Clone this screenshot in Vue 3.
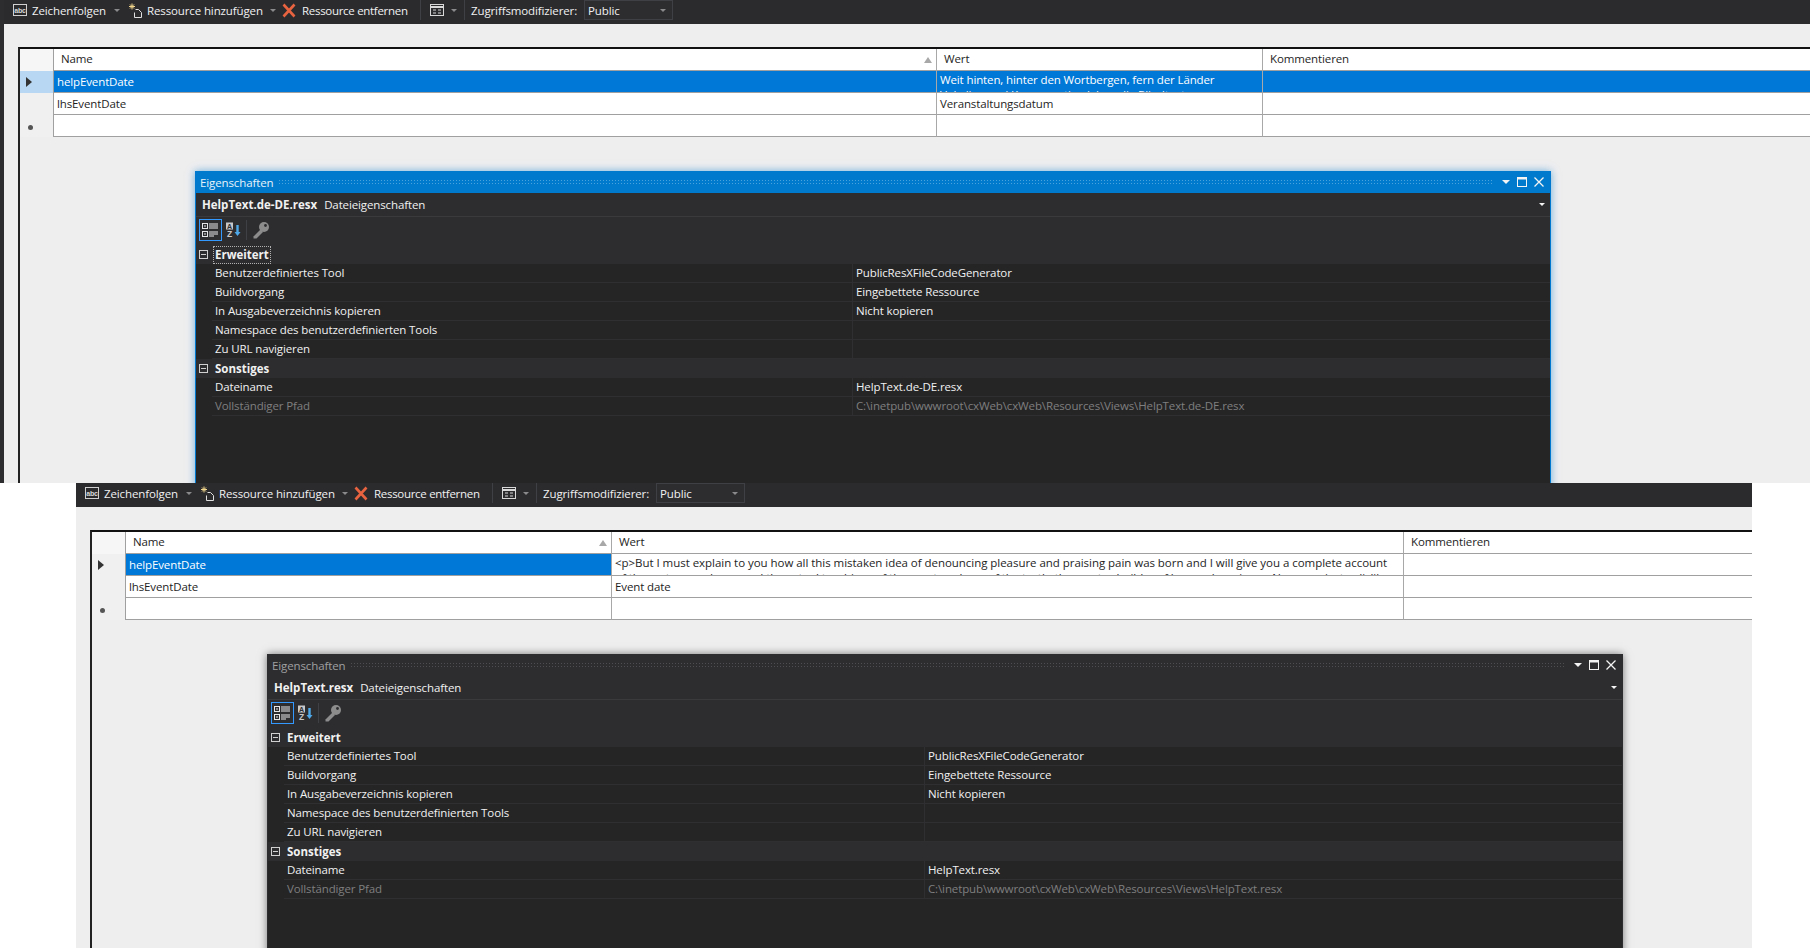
<template>
    <div class="page">
        <div v-for="shot in shots" :key="shot.id" class="shot" :class="shot.id">
            <div class="toolbar">
                <svg class="ico abc" width="14" height="12" viewBox="0 0 14 12">
                    <rect x="0.5" y="0.5" width="13" height="11" fill="none" stroke="#d0d0d0" />
                    <text x="7" y="8.6" text-anchor="middle" class="abc-text">abc</text>
                </svg>
                <span class="tool-text t-strings">Zeichenfolgen</span>
                <i class="arrow a-strings"></i>
                <svg class="ico add" width="15" height="15" viewBox="0 0 15 15">
                    <path d="M4 0.5v6M1 3.5h6M2 1.5l4 4M6 1.5l-4 4" stroke="#f0d58a" stroke-width="1" fill="none" />
                    <path d="M7.5 6.5h3l3 3v5h-7v-5" stroke="#e0e0e0" fill="none" />
                </svg>
                <span class="tool-text t-add">Ressource hinzufügen</span>
                <i class="arrow a-add"></i>
                <svg class="ico del" width="14" height="15" viewBox="0 0 14 15">
                    <path d="M1.5 1.5L12.5 13.5M12.5 1.5L1.5 13.5" stroke="#e8633f" stroke-width="2.6" fill="none" />
                </svg>
                <span class="tool-text t-del">Ressource entfernen</span>
                <span class="sep s-one"></span>
                <svg class="ico list" width="14" height="12" viewBox="0 0 14 12">
                    <rect x="0.5" y="0.5" width="13" height="11" fill="none" stroke="#d8d8d8" />
                    <path d="M0.5 3h13" stroke="#d8d8d8" stroke-width="2" />
                    <path d="M3 6h3M8 6h3M3 9h3M8 9h3" stroke="#d8d8d8" />
                </svg>
                <i class="arrow a-list"></i>
                <span class="sep s-two"></span>
                <span class="tool-text t-access">Zugriffsmodifizierer:</span>
                <div class="combo">
                    <span>Public</span>
                    <i class="arrow"></i>
                </div>
            </div>

            <div class="workspace">
                <div class="table">
                    <div class="row head">
                        <div class="rh"></div>
                        <div class="cell name-head">Name<span class="sort"></span></div>
                        <div class="cell">Wert</div>
                        <div class="cell">Kommentieren</div>
                    </div>
                    <div class="row first">
                        <div class="rh"><span class="current"></span></div>
                        <div class="cell name-cell">helpEventDate</div>
                        <div class="cell value-cell">{{ shot.help }}</div>
                        <div class="cell comment-cell"></div>
                    </div>
                    <div class="row">
                        <div class="rh"></div>
                        <div class="cell">lhsEventDate</div>
                        <div class="cell">{{ shot.lhs }}</div>
                        <div class="cell"></div>
                    </div>
                    <div class="row">
                        <div class="rh"><span class="star"></span></div>
                        <div class="cell"></div>
                        <div class="cell"></div>
                        <div class="cell"></div>
                    </div>
                </div>

                <div class="panel">
                    <div class="title">
                        <span class="title-text">Eigenschaften</span>
                        <span class="dots"></span>
                        <i class="arrow big"></i>
                        <svg class="win-btn" width="10" height="10" viewBox="0 0 10 10">
                            <rect x="0.5" y="0.5" width="9" height="9" fill="none" stroke="#f4f4f4" />
                            <path d="M0 1.5h10" stroke="#f4f4f4" stroke-width="2" />
                        </svg>
                        <svg class="win-btn close" width="10" height="10" viewBox="0 0 10 10">
                            <path d="M0.5 0.5l9 9M9.5 0.5l-9 9" stroke="#f4f4f4" stroke-width="1.3" />
                        </svg>
                    </div>
                    <div class="subject">
                        <b>{{ shot.file }}</b>
                        <span>Dateieigenschaften</span>
                        <i class="arrow small"></i>
                    </div>
                    <div class="prop-tools">
                        <div class="cat-btn">
                            <svg width="17" height="16" viewBox="0 0 17 16">
                                <rect x="0.5" y="1.5" width="5" height="5" fill="none" stroke="#e8e8e8" />
                                <rect x="0.5" y="9.5" width="5" height="5" fill="none" stroke="#e8e8e8" />
                                <path d="M2 4h2M2 12h2M7 2h9M7 4h9M7 6h9M7 10h9M7 12h9M7 14h5" stroke="#e8e8e8" />
                            </svg>
                        </div>
                        <svg class="az" width="16" height="16" viewBox="0 0 16 16">
                            <rect x="1" y="0.5" width="7" height="7" fill="#c8c8c8" />
                            <text x="4.5" y="6.6" text-anchor="middle" class="az-a">A</text>
                            <text x="4.5" y="15" text-anchor="middle" class="az-z">Z</text>
                            <path d="M12.5 3v9" stroke="#4fa8e8" stroke-width="2.4" />
                            <path d="M9.5 10h6l-3 4z" fill="#4fa8e8" />
                        </svg>
                        <span class="tool-sep"></span>
                        <svg class="key" width="18" height="18" viewBox="0 0 18 18">
                            <circle cx="12" cy="6" r="5" fill="#8c8c8c" />
                            <path d="M9 8L1.5 15.5v2h3L11 11z" fill="#8c8c8c" />
                            <circle cx="13.5" cy="4.5" r="1.4" fill="#2d2d30" />
                        </svg>
                    </div>
                    <template v-for="group in shot.groups" :key="group.name">
                        <div class="category">
                            <span class="minus"></span>
                            <b :class="{ focused: group.focused && shot.id === 'upper' }">{{ group.name }}</b>
                        </div>
                        <div v-for="item in group.items" :key="item.label" class="prop" :class="{ muted: item.muted }">
                            <span class="prop-label">{{ item.label }}</span>
                            <span class="prop-value">{{ item.value }}</span>
                        </div>
                    </template>
                </div>
            </div>
        </div>
    </div>
</template>

<script setup>
    function makeGroups(file, path) {
        return [
            {
                name: 'Erweitert',
                focused: true,
                items: [
                    { label: 'Benutzerdefiniertes Tool', value: 'PublicResXFileCodeGenerator' },
                    { label: 'Buildvorgang', value: 'Eingebettete Ressource' },
                    { label: 'In Ausgabeverzeichnis kopieren', value: 'Nicht kopieren' },
                    { label: 'Namespace des benutzerdefinierten Tools', value: '' },
                    { label: 'Zu URL navigieren', value: '' }
                ]
            },
            {
                name: 'Sonstiges',
                items: [
                    { label: 'Dateiname', value: file },
                    { label: 'Vollständiger Pfad', value: path, muted: true }
                ]
            }
        ];
    }

    const shots = [
        {
            id: 'upper',
            help: 'Weit hinten, hinter den Wortbergen, fern der Länder\nVokalien und Konsonantien leben die Blindtexte.',
            lhs: 'Veranstaltungsdatum',
            file: 'HelpText.de-DE.resx',
            groups: makeGroups('HelpText.de-DE.resx', 'C:\\inetpub\\wwwroot\\cxWeb\\cxWeb\\Resources\\Views\\HelpText.de-DE.resx')
        },
        {
            id: 'lower',
            help: '<p>But I must explain to you how all this mistaken idea of denouncing pleasure and praising pain was born and I will give you a complete account\nof the system, and expound the actual teachings of the great explorer of the truth, the master-builder of human happiness. No one rejects, dislikes, or',
            lhs: 'Event date',
            file: 'HelpText.resx',
            groups: makeGroups('HelpText.resx', 'C:\\inetpub\\wwwroot\\cxWeb\\cxWeb\\Resources\\Views\\HelpText.resx')
        }
    ];
</script>

<style>
    html, body {
        margin: 0;
        background: #ffffff;
    }
</style>

<style scoped>
    .page {
        width: 1810px;
        height: 948px;
        overflow: hidden;
        font-family: "Open Sans", "Noto Sans", sans-serif;
        font-size: 11.5px;
        letter-spacing: -0.12px;
        color: #1e1e1e;
    }

    .shot {
        overflow: hidden;
        background: #eeeeef;
    }

    .upper {
        height: 483px;
        border-left: 4px solid #2d2d30;
        --name-col: 883px;
        --value-col: 326px;
        --panel-border: #0078d0;
        --panel-title: #007acc;
        --title-color: #e8f2fa;
        --panel-shadow: rgba(0, 122, 204, 0.55);
        --dot-color: #4aa3dd;
    }

    .lower {
        height: 465px;
        width: 1676px;
        margin-left: 76px;
        --name-col: 486px;
        --value-col: 792px;
        --panel-border: #2d2d30;
        --panel-title: #2d2d30;
        --title-color: #a0a0a0;
        --panel-shadow: rgba(0, 0, 0, 0.5);
        --dot-color: #4e4e52;
    }

    .toolbar {
        height: 24px;
        box-sizing: border-box;
        padding: 0 0 4px 9px;
        background: #2b2b2e;
        display: flex;
        align-items: center;
        color: #f1f1f1;
    }

    .ico {
        flex: none;
    }

    .abc-text {
        font-size: 7px;
        font-weight: 700;
        fill: #d8d8d8;
        font-family: "Liberation Sans", sans-serif;
    }

    .tool-text {
        white-space: nowrap;
    }

    .t-strings {
        margin-left: 5px;
        width: 76px;
    }

    .arrow {
        display: block;
        width: 0;
        height: 0;
        border-left: 3px solid transparent;
        border-right: 3px solid transparent;
        border-top: 3px solid #8a8a8c;
        flex: none;
    }

    .a-strings {
        margin-left: 6px;
    }

    .add {
        margin-left: 8px;
    }

    .t-add {
        margin-left: 4px;
        width: 116px;
    }

    .a-add {
        margin-left: 7px;
    }

    .del {
        margin-left: 6px;
    }

    .t-del {
        margin-left: 6px;
        width: 106px;
        letter-spacing: -0.3px;
    }

    .sep {
        width: 1px;
        height: 20px;
        background: #3f3f46;
        flex: none;
    }

    .s-one {
        margin-left: 12px;
    }

    .list {
        margin-left: 9px;
    }

    .a-list {
        margin-left: 7px;
    }

    .s-two {
        margin-left: 7px;
    }

    .t-access {
        margin-left: 6px;
        width: 107px;
    }

    .combo {
        margin-left: 6px;
        width: 89px;
        height: 20px;
        box-sizing: border-box;
        border: 1px solid #3f3f46;
        background: #2d2d30;
        display: flex;
        align-items: center;
        justify-content: space-between;
        padding: 0 6px 0 3px;
    }

    .workspace {
        margin: 23px 0 0 14px;
        height: 900px;
        border-top: 2px solid #111111;
        border-left: 2px solid #222222;
    }

    .row {
        display: grid;
        grid-template-columns: 34px var(--name-col) var(--value-col) 1fr;
        height: 22px;
        box-sizing: border-box;
    }

    .rh {
        background: #f0f0f0;
        border-right: 1px solid #a0a0a0;
        display: flex;
        align-items: center;
        justify-content: center;
    }

    .head .rh {
        background: #f6f6f6;
    }

    .upper .first .rh {
        background: #b7d7f2;
    }

    .cell {
        background: #ffffff;
        border-bottom: 1px solid #a0a0a0;
        border-right: 1px solid #a8a8a8;
        padding: 3px 3px 0;
        line-height: 16px;
        overflow: hidden;
        box-sizing: border-box;
    }

    .head .cell {
        padding: 2px 3px 0 7px;
        position: relative;
    }

    .row .cell:last-child {
        border-right: 0;
    }

    .sort {
        position: absolute;
        right: 4px;
        top: 8px;
        width: 0;
        height: 0;
        border-left: 4px solid transparent;
        border-right: 4px solid transparent;
        border-bottom: 6px solid #a8a8a8;
    }

    .name-cell {
        background: #0078d7;
        color: #ffffff;
    }

    .row .value-cell {
        padding-top: 1px;
        line-height: 15px;
        white-space: pre;
    }

    .lower .value-cell {
        letter-spacing: -0.04px;
    }

    .upper .value-cell, .upper .comment-cell {
        background: #0078d7;
        color: #ffffff;
    }

    .current {
        width: 0;
        height: 0;
        border-top: 5px solid transparent;
        border-bottom: 5px solid transparent;
        border-left: 6px solid #333333;
        margin-right: 15px;
    }

    .star {
        width: 5px;
        height: 5px;
        border-radius: 50%;
        background: #555555;
        margin-right: 12px;
        margin-top: 2px;
    }

    .panel {
        width: 1356px;
        height: 700px;
        box-sizing: border-box;
        margin: 34px 0 0 175px;
        border: 1px solid var(--panel-border);
        border-top: 0;
        background: #252526;
        box-shadow: 0 0 8px var(--panel-shadow);
        color: #f1f1f1;
    }

    .title {
        height: 22px;
        background: var(--panel-title);
        display: flex;
        align-items: center;
        padding: 0 6px 0 4px;
    }

    .title-text {
        color: var(--title-color);
        white-space: nowrap;
    }

    .dots {
        flex: 1;
        height: 6px;
        margin: 0 8px 0 5px;
        background-image: radial-gradient(var(--dot-color) 0.6px, transparent 0.7px);
        background-size: 3px 3px;
    }

    .arrow.big {
        border-left-width: 4px;
        border-right-width: 4px;
        border-top: 4px solid #f4f4f4;
        margin-right: 7px;
    }

    .close {
        margin-left: 7px;
    }

    .subject {
        height: 24px;
        box-sizing: border-box;
        background: #2d2d30;
        border-bottom: 1px solid #3a3a3d;
        display: flex;
        align-items: center;
        padding: 0 5px 0 6px;
    }

    .subject b {
        font-weight: 700;
        letter-spacing: 0;
    }

    .subject span {
        margin-left: 7px;
    }

    .arrow.small {
        margin-left: auto;
        border-top-color: #f4f4f4;
    }

    .prop-tools {
        height: 28px;
        box-sizing: border-box;
        padding: 2px 0 4px 3px;
        background: #2d2d30;
        display: flex;
        align-items: center;
    }

    .cat-btn {
        width: 23px;
        height: 22px;
        box-sizing: border-box;
        border: 1px solid #3399ff;
        display: flex;
        align-items: center;
        justify-content: center;
    }

    .az {
        margin-left: 3px;
    }

    .az-a {
        font-size: 7px;
        font-weight: 700;
        fill: #2d2d30;
        font-family: "Liberation Sans", sans-serif;
    }

    .az-z {
        font-size: 8.5px;
        font-weight: 700;
        fill: #c8c8c8;
        font-family: "Liberation Sans", sans-serif;
    }

    .tool-sep {
        width: 1px;
        height: 20px;
        background: #3f3f46;
        margin: 0 5px;
    }

    .category {
        height: 19px;
        background: #2d2d30;
        display: flex;
        align-items: center;
        padding-left: 3px;
    }

    .category b {
        margin-left: 5px;
        padding: 0 1px 1px;
        line-height: 15px;
        font-weight: 700;
        letter-spacing: 0;
        border: 1px solid transparent;
    }

    .category b.focused {
        border: 1px dotted #b0b0b0;
    }

    .minus {
        width: 9px;
        height: 9px;
        box-sizing: border-box;
        border: 1px solid #d0d0d0;
        background: linear-gradient(#d0d0d0, #d0d0d0) center / 5px 1px no-repeat;
        flex: none;
    }

    .prop {
        height: 19px;
        box-sizing: border-box;
        margin-left: 16px;
        display: grid;
        grid-template-columns: 640px 1fr;
        background: #252526;
        border-bottom: 1px solid #2f2f32;
        line-height: 18px;
    }

    .prop-label {
        padding-left: 3px;
        white-space: nowrap;
    }

    .prop-value {
        border-left: 1px solid #2f2f32;
        padding-left: 3px;
        white-space: nowrap;
    }

    .muted {
        color: #7f7f7f;
    }
</style>
